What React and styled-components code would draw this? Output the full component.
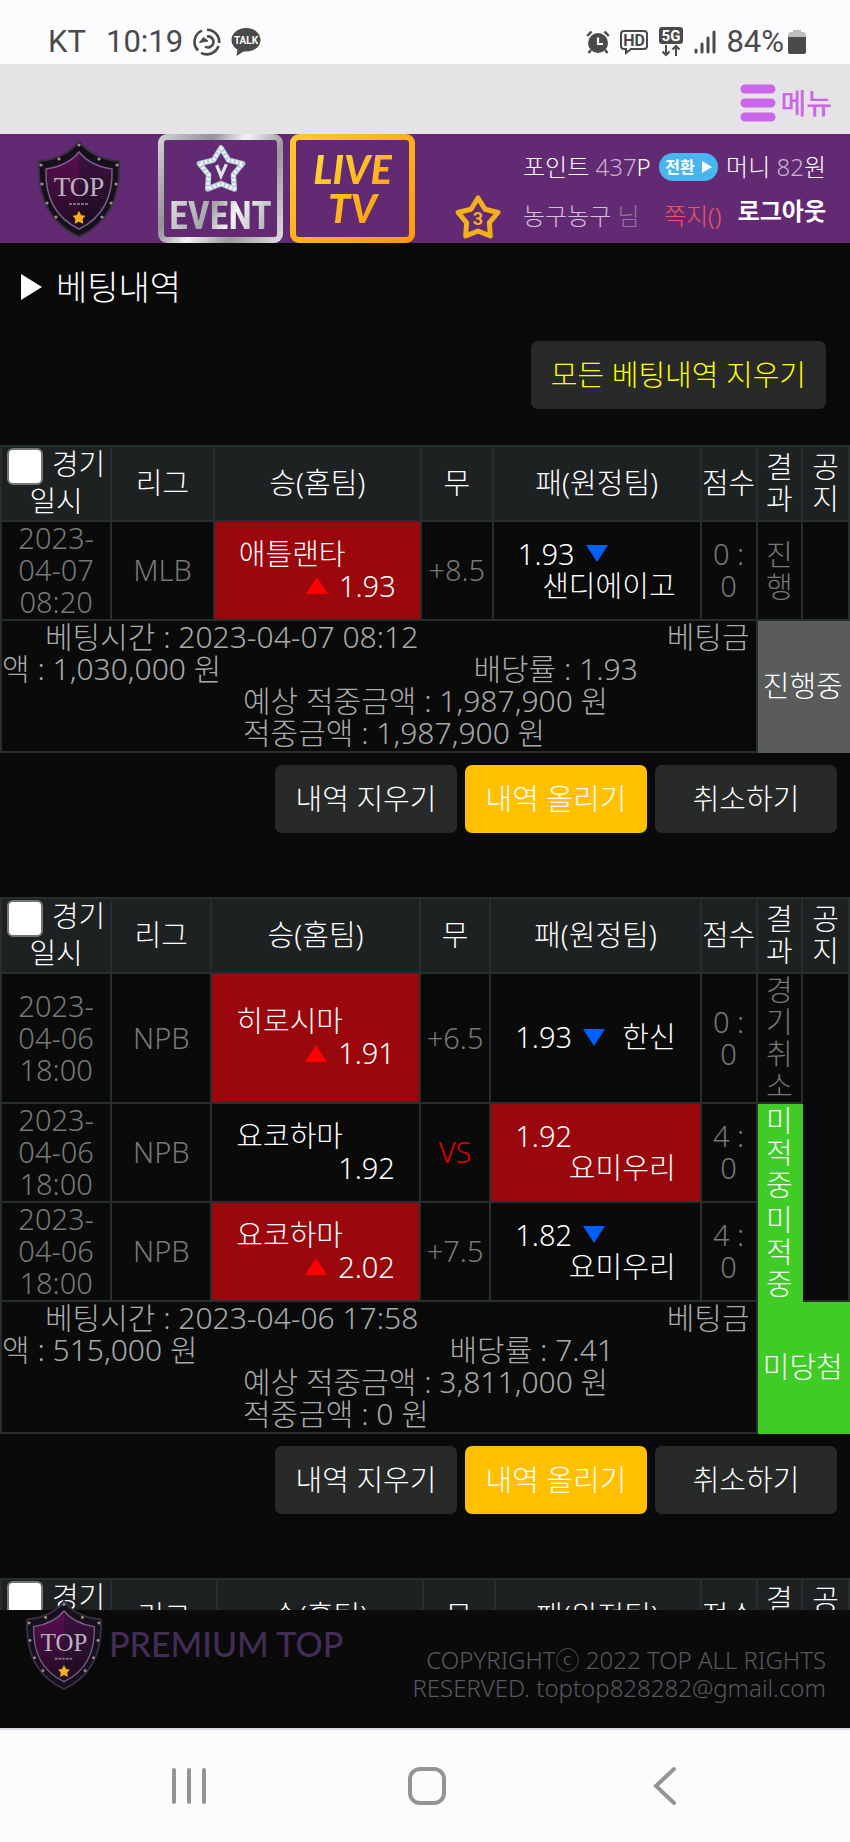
import { useId } from 'react';
import styled, { createGlobalStyle } from 'styled-components';

const summaryText = {
    time: '베팅시간',
    rate: '배당률',
    expected: '예상 적중금액',
    won: '적중금액',
};

const bets = [
    {
        id: 1,
        cols: [13, 12.1, 24.4, 8.5, 24.5, 6.6, 5.4, 5.5],
        games: [
            {
                date: '2023-04-07 08:20',
                league: 'MLB',
                home: { name: '애틀랜타', odds: '1.93', up: true, picked: true },
                draw: '+8.5',
                away: { name: '샌디에이고', odds: '1.93', down: true },
                score: '0 : 0',
                result: '진행',
            },
        ],
        time: '2023-04-07 08:12',
        amount: '1,030,000',
        rate: '1.93',
        expected: '1,987,900',
        won: '1,987,900',
        status: '진행중',
        statusColor: '#5a5c5b',
    },
    {
        id: 2,
        cols: [13, 11.8, 24.6, 8.3, 24.8, 6.6, 5.4, 5.5],
        games: [
            {
                date: '2023-04-06 18:00',
                league: 'NPB',
                home: { name: '히로시마', odds: '1.91', up: true, picked: true },
                draw: '+6.5',
                away: { name: '한신', odds: '1.93', down: true },
                score: '0 : 0',
                result: '경기취소',
            },
            {
                date: '2023-04-06 18:00',
                league: 'NPB',
                home: { name: '요코하마', odds: '1.92' },
                draw: 'VS',
                away: { name: '요미우리', odds: '1.92', picked: true },
                score: '4 : 0',
                result: '미적중',
                missed: true,
            },
            {
                date: '2023-04-06 18:00',
                league: 'NPB',
                home: { name: '요코하마', odds: '2.02', up: true, picked: true },
                draw: '+7.5',
                away: { name: '요미우리', odds: '1.82', down: true },
                score: '4 : 0',
                result: '미적중',
                missed: true,
            },
        ],
        time: '2023-04-06 17:58',
        amount: '515,000',
        rate: '7.41',
        expected: '3,811,000',
        won: '0',
        status: '미당첨',
        statusColor: '#3fcc26',
    },
    {
        id: 3,
        cols: [13, 12.5, 24.3, 8.4, 24.3, 6.6, 5.4, 5.5],
        games: [],
    },
];

const STAR = 'M24 4 L31 15.300 L44 18.500 L35.400 28.700 L36.300 42 L24 37 L11.700 42 L12.600 28.700 L4 18.500 L17 15.300 Z';

const Shield = ({ className }) => {
    const id = useId();

    return (
        <svg className={className} viewBox="0 0 84 98" aria-hidden="true">
            <defs>
                <linearGradient id={`${id}l`} x1="0" y1="0" x2="0" y2="1">
                    <stop offset="0" stopColor="#5c0d50" />
                    <stop offset="1" stopColor="#200c22" />
                </linearGradient>
                <linearGradient id={`${id}r`} x1="0" y1="0" x2="0" y2="1">
                    <stop offset="0" stopColor="#3c1240" />
                    <stop offset="1" stopColor="#1d0b20" />
                </linearGradient>
            </defs>
            <path d="M42 1 C50 13 66 20 82 21 C84 54 74 82 42 97 C10 82 0 54 2 21 C18 20 34 13 42 1 Z" fill="#15101c" stroke="#3a3044" strokeWidth="2" />
            <path d="M42 13 C50 22 62 27 74 29 C75 55 67 76 42 88 Z" fill={`url(#${id}r)`} />
            <path d="M42 13 C34 22 22 27 10 29 C9 55 17 76 42 88 Z" fill={`url(#${id}l)`} />
            <path d="M42 12 C50 22 62 27 75 29 C76 56 67 77 42 89 C17 77 8 56 9 29 C22 27 34 22 42 12 Z" fill="none" stroke="#7a5f88" strokeWidth="1.5" />
            {[[42, 5], [22, 19], [62, 19], [4, 25], [80, 25], [5, 44], [79, 44], [10, 63], [74, 63], [19, 77], [65, 77]].map(([x, y]) => (
                <circle key={`${x}-${y}`} cx={x} cy={y} r="1.6" fill="#a98982" />
            ))}
            <text x="42" y="56" textAnchor="middle" fontFamily="Liberation Serif, serif" fontSize="27" fill="#b9b3bb">TOP</text>
            <path d="M32 64 H52" stroke="#7b6d80" strokeWidth="2" strokeDasharray="3 1" />
            <path d="M42 73 l1.500 3 3 .5 -2 2.500 .5 3 -3 -1.500 -3 1.500 .5 -3 -2 -2.500 3 -.5 Z" fill="#f7b21a" stroke="#f7b21a" strokeWidth="2" />
        </svg>
    );
};

const StatusBar = () => (
    <StyledStatusBar>
        <StatusGroup>
            <Carrier>KT</Carrier>
            <span>10:19</span>
            <svg width="28" height="28" viewBox="0 0 28 28" fill="none" stroke="#4a4a4a" strokeWidth="2.6">
                <path d="M9 2.6 A12.3 12.3 0 0 0 5 22.5 M8 24.8 A12.3 12.3 0 0 0 25.5 18 M26.2 15 A12.3 12.3 0 0 0 14 1.7" />
                <path d="M14 8.500 A5.500 5.500 0 1 1 12 18.500" />
                <path d="M6.500 14.500 L10.500 9.500 L15 13 Z" fill="#4a4a4a" strokeWidth="1" />
            </svg>
            <svg width="30" height="28" viewBox="0 0 30 28">
                <path d="M15 0 C23 0 29.500 5 29.500 12 C29.500 19 23 23.500 15 23.500 L12.500 23.500 L5.500 28 L6.500 21.500 C3 19.500 .5 16 .5 12 C.5 5 7 0 15 0 Z" fill="#4a4a4a" />
                <text x="15" y="16" textAnchor="middle" fontFamily="Roboto, sans-serif" fontWeight="700" fontSize="10" fill="#fff">TALK</text>
            </svg>
        </StatusGroup>
        <StatusGroup $tight>
            <svg width="24" height="24" viewBox="0 0 24 24">
                <circle cx="12" cy="13" r="10" fill="#4a4a4a" />
                <path d="M1.200 6 L5.500 1.500 M22.800 6 L18.500 1.500 M5 20 L2.500 23 M19 20 L21.500 23" stroke="#4a4a4a" strokeWidth="2.500" />
                <path d="M12 7.500 V14 H17" stroke="#fff" strokeWidth="2.200" fill="none" />
            </svg>
            <svg width="30" height="26" viewBox="0 0 30 26">
                <path d="M5 2 H25 Q28 2 28 5 V17 Q28 20 25 20 H12 L7 24 V20 H5 Q2 20 2 17 V5 Q2 2 5 2 Z" fill="none" stroke="#4a4a4a" strokeWidth="2" />
                <text x="15" y="17" textAnchor="middle" fontFamily="Roboto, sans-serif" fontWeight="700" fontSize="16" fill="#4a4a4a">HD</text>
            </svg>
            <svg width="26" height="30" viewBox="0 0 26 30">
                <rect x="1" y="0" width="24" height="17" rx="3" fill="#4a4a4a" />
                <text x="13" y="14" textAnchor="middle" fontFamily="Roboto, sans-serif" fontWeight="700" fontSize="15" fill="#fff">5G</text>
                <path d="M8 18 V28 M4.500 24.500 L8 28 L11.500 24.500 M18 29 V19 M14.500 22.500 L18 19 L21.500 22.500" fill="none" stroke="#4a4a4a" strokeWidth="2" />
            </svg>
            <svg width="24" height="24" viewBox="0 0 24 24" stroke="#4a4a4a" strokeWidth="3" strokeLinecap="round">
                <path d="M3 20 V22 M9 14 V22 M15 8 V22 M21 2 V22" />
            </svg>
            <Battery>
                84%
                <svg width="18" height="26" viewBox="0 0 18 26">
                    <path d="M5 1 H13 V3 H16 Q18 4 18 6 V9 H0 V6 Q0 4 2 3 H5 Z" fill="#bdbdbf" />
                    <path d="M0 8 H18 V23 Q18 25 15 25 H3 Q0 25 0 23 Z" fill="#4a4a4a" />
                </svg>
            </Battery>
        </StatusGroup>
    </StyledStatusBar>
);

const Header = () => (
    <StyledHeader>
        <LogoLink href="#home" aria-label="TOP">
            <HeaderShield />
        </LogoLink>
        <EventButton type="button">
            <svg width="52" height="54" viewBox="0 0 48 47" aria-hidden="true">
                <path d={STAR} fill="none" stroke="#b9cdd8" strokeWidth="5" strokeLinejoin="round" />
                <path d={STAR} fill="none" stroke="#f2f8fb" strokeWidth="3" strokeDasharray="2 2" strokeLinejoin="round" />
                <path d="M20 20 L24 30 L29 19" fill="none" stroke="#dfe3e8" strokeWidth="3" />
            </svg>
            <EventText>EVENT</EventText>
        </EventButton>
        <LiveButton type="button">
            <LiveText>LIVE<br />TV</LiveText>
        </LiveButton>
        <Level width="48" height="46" viewBox="0 0 48 46" role="img" aria-label="3">
            <path d={STAR} fill="none" stroke="#f3b01d" strokeWidth="5" strokeLinejoin="round" />
            <text x="24" y="31" textAnchor="middle" fontFamily="Roboto, sans-serif" fontWeight="700" fontSize="18" fill="#f3b01d">3</text>
        </Level>
        <UserInfo>
            <InfoRow>
                <span>포인트 <Dim>437</Dim>P</span>
                <ConvertButton type="button">
                    전환
                    <svg width="10" height="12" viewBox="0 0 10 12"><path d="M0 0 L10 6 L0 12 Z" fill="#fff" /></svg>
                </ConvertButton>
                <span>머니 <Dim>82</Dim>원</span>
            </InfoRow>
            <InfoRow>
                <UserName>농구농구 <span>님</span></UserName>
                <NoteLink href="#notes">쪽지()</NoteLink>
                <LogoutLink href="#logout">로그아웃</LogoutLink>
            </InfoRow>
        </UserInfo>
    </StyledHeader>
);

const Up = () => (
    <svg width="22" height="17" viewBox="0 0 22 17" aria-label="상승"><path d="M11 0 L22 17 H0 Z" fill="#ff0000" /></svg>
);

const Down = () => (
    <svg width="22" height="17" viewBox="0 0 22 17" aria-label="하락"><path d="M0 0 H22 L11 17 Z" fill="#005fff" /></svg>
);

const GameRow = ({ game, notice }) => (
    <tr>
        <Cell>{game.date}</Cell>
        <Cell>{game.league}</Cell>
        <TeamCell $picked={game.home.picked}>
            <Team>
                <span>{game.home.name}</span>
                <Odds $end>{game.home.up && <Up />}{game.home.odds}</Odds>
            </Team>
        </TeamCell>
        <Cell $versus={game.draw === 'VS'}>{game.draw}</Cell>
        <TeamCell $picked={game.away.picked}>
            <Team>
                <Odds>{game.away.odds}{game.away.down && <Down />}</Odds>
                <AwayName>{game.away.name}</AwayName>
            </Team>
        </TeamCell>
        <ScoreCell>{game.score}</ScoreCell>
        <ResultCell $missed={game.missed}>{game.result}</ResultCell>
        {notice && <Cell rowSpan={notice} />}
    </tr>
);

const Bet = ({ bet }) => (
    <BetBlock>
        <BetTable>
            <colgroup>
                {bet.cols.map((width, index) => <col key={index} style={{ width: `${width}%` }} />)}
            </colgroup>
            <thead>
                <tr>
                    <HeadCell><label><Checkbox type="checkbox" />경기 일시</label></HeadCell>
                    <HeadCell>리그</HeadCell>
                    <HeadCell>승(홈팀)</HeadCell>
                    <HeadCell>무</HeadCell>
                    <HeadCell>패(원정팀)</HeadCell>
                    <HeadCell>점수</HeadCell>
                    <HeadCell>결과</HeadCell>
                    <HeadCell>공지</HeadCell>
                </tr>
            </thead>
            <tbody>
                {bet.games.map((game, index) => (
                    <GameRow key={index} game={game} notice={index === 0 && bet.games.length} />
                ))}
                {bet.status && (
                    <tr>
                        <SummaryCell colSpan={6}>
                            <SummaryTop>
                                <span>{summaryText.time} : {bet.time}</span>
                                <span>베팅금</span>
                            </SummaryTop>
                            <SummaryAmount>
                                <span>액 : {bet.amount} 원</span>
                                <span>{summaryText.rate} : {bet.rate}</span>
                            </SummaryAmount>
                            <SummaryLine>{summaryText.expected} : {bet.expected} 원</SummaryLine>
                            <SummaryLine>{summaryText.won} : {bet.won} 원</SummaryLine>
                        </SummaryCell>
                        <StatusCell colSpan={2} $color={bet.statusColor}>{bet.status}</StatusCell>
                    </tr>
                )}
            </tbody>
        </BetTable>
        {bet.status && (
            <Actions>
                <Button type="button">내역 지우기</Button>
                <Button type="button" $primary>내역 올리기</Button>
                <Button type="button">취소하기</Button>
            </Actions>
        )}
    </BetBlock>
);

const App = () => (
    <>
        <GlobalStyle />
        <Screen>
            <StatusBar />
            <MenuBar>
                <MenuButton type="button">
                    <svg width="36" height="38" viewBox="0 0 36 38" stroke="#cb66ea" strokeWidth="9" strokeLinecap="round">
                        <path d="M5 5 H31 M5 19 H31 M5 33 H31" />
                    </svg>
                    메뉴
                </MenuButton>
            </MenuBar>
            <Header />
            <Content>
                <Title>
                    <svg width="21" height="26" viewBox="0 0 21 26" aria-hidden="true"><path d="M0 0 L21 13 L0 26 Z" fill="#fff" /></svg>
                    베팅내역
                </Title>
                <ClearAll>
                    <ClearButton type="button">모든 베팅내역 지우기</ClearButton>
                </ClearAll>
                {bets.map((bet) => <Bet key={bet.id} bet={bet} />)}
            </Content>
            <Footer>
                <FooterShield />
                <Brand>PREMIUM TOP</Brand>
                <Copyright>COPYRIGHTⓒ 2022 TOP ALL RIGHTS RESERVED. toptop828282@gmail.com</Copyright>
            </Footer>
            <NavBar>
                <NavButton type="button" aria-label="최근 앱">
                    <svg width="40" height="40" viewBox="0 0 40 40"><path d="M5 4 V36 M20 4 V36 M35 4 V36" /></svg>
                </NavButton>
                <NavButton type="button" aria-label="홈">
                    <svg width="40" height="40" viewBox="0 0 40 40"><rect x="3" y="3" width="34" height="34" rx="10" /></svg>
                </NavButton>
                <NavButton type="button" aria-label="뒤로">
                    <svg width="40" height="40" viewBox="0 0 40 40"><path d="M29 3 L11 20 L29 37" /></svg>
                </NavButton>
            </NavBar>
        </Screen>
    </>
);

export default App;

const GlobalStyle = createGlobalStyle`
    * {
        box-sizing: border-box;
    }

    body {
        margin: 0;
        background-color: #0a0a0a;
        color: #fff;
        font-family: "Noto Sans", "Noto Sans CJK KR", sans-serif;
        font-size: 29px;
        font-weight: 300;
        line-height: 32px;
    }

    button {
        border: 0;
        padding: 0;
        font: inherit;
        color: inherit;
        background: none;
        cursor: pointer;
    }

    a {
        color: inherit;
        text-decoration: none;
    }
`

const Screen = styled.div`
    display: flex;
    flex-direction: column;
    height: 100vh;
`

const StyledStatusBar = styled.div`
    flex: none;
    display: flex;
    justify-content: space-between;
    padding: 24px 44px 4px 48px;
    background-color: #fcfcfe;
    color: #4a4a4a;
    font-family: Roboto, sans-serif;
    font-size: 31px;
    font-weight: 400;
    line-height: 36px;
`

const StatusGroup = styled.div`
    display: flex;
    align-items: center;
    gap: ${({ $tight }) => $tight ? '9px' : '10px'};
`

const Carrier = styled.span`
    margin-right: 10px;
`

const Battery = styled.span`
    display: flex;
    align-items: center;
    gap: 4px;
`

const MenuBar = styled.nav`
    flex: none;
    display: flex;
    justify-content: flex-end;
    padding: 8px 18px 0;
    height: 70px;
    background-color: #e5e3e5;
`

const MenuButton = styled.button`
    display: flex;
    align-items: center;
    gap: 4px;
    color: #cb66ea;
    font-size: 28px;
    font-weight: 500;
`

const StyledHeader = styled.header`
    flex: none;
    display: flex;
    padding: 0 24px 0 37px;
    background-color: #632a74;
`

const LogoLink = styled.a`
    display: flex;
    align-items: center;
    margin-right: 37px;
`

const HeaderShield = styled(Shield)`
    width: 84px;
    height: 98px;
`

const EventButton = styled.button`
    width: 125px;
    height: 109px;
    display: flex;
    flex-direction: column;
    align-items: center;
    padding-top: 2px;
    border: 6px solid transparent;
    border-radius: 9px;
    background: linear-gradient(#632a74, #632a74) padding-box, linear-gradient(120deg, #d5d5d8, #929297 30%, #f4f4f6 48%, #99999e 70%, #e0e0e3) border-box;
    margin-right: 7px;
`

const EventText = styled.span`
    font: 700 38px/40px "Liberation Sans Narrow", "Roboto Condensed", Lato, sans-serif;
    color: transparent;
    background: linear-gradient(120deg, #e4e4e6, #a3a3a8 40%, #f4f4f6 60%, #a3a3a8);
    background-clip: text;
`

const LiveButton = styled(EventButton)`
    justify-content: center;
    padding-top: 0;
    margin-right: 0;
    background: linear-gradient(#632a74, #632a74) padding-box, linear-gradient(135deg, #fdc92f, #ff9a0a) border-box;
`

const LiveText = styled.span`
    font: italic 900 40px/39px Lato, sans-serif;
    color: transparent;
    background: linear-gradient(135deg, #fddc3a, #ff9408);
    background-clip: text;
`

const Level = styled.svg`
    flex: none;
    align-self: flex-end;
    margin: 0 21px 3px auto;
`

const UserInfo = styled.div`
    display: flex;
    flex-direction: column;
    gap: 17px;
    width: 303px;
    font-size: 24px;
    padding-top: 17px;
`

const InfoRow = styled.div`
    display: flex;
    justify-content: space-between;
    align-items: center;
    height: 32px;
    white-space: nowrap;
`

const Dim = styled.span`
    color: #c9b3d0;
`

const ConvertButton = styled.button`
    display: flex;
    align-items: center;
    justify-content: center;
    gap: 7px;
    width: 59px;
    height: 28px;
    border-radius: 14px;
    background-color: #49b5ee;
    font-size: 16px;
    line-height: 28px;
    font-weight: 700;
`

const UserName = styled.span`
    color: #d3c0d9;

    span {
        color: #94739e;
    }
`

const NoteLink = styled.a`
    color: #ee5560;
    margin-left: 8px;
`

const LogoutLink = styled.a`
    font-weight: 700;
    margin-bottom: 10px;
`

const Content = styled.main`
    flex: 1;
    min-height: 0;
    overflow: hidden;
`

const Title = styled.h1`
    display: flex;
    align-items: center;
    gap: 14px;
    margin: 0;
    padding: 24px 21px 0;
    font-size: 34px;
    line-height: 40px;
    font-weight: 300;
`

const ClearAll = styled.div`
    display: flex;
    justify-content: flex-end;
    padding: 34px 24px 36px;
`

const Button = styled.button`
    min-width: 182px;
    height: 68px;
    padding: 0 20px;
    border-radius: 7px;
    background-color: ${({ $primary }) => $primary ? '#ffc000' : '#282a2a'};
`

const ClearButton = styled(Button)`
    color: #ffff00;
`

const BetBlock = styled.section`
    margin-bottom: 64px;
`

const BetTable = styled.table`
    width: 100%;
    table-layout: fixed;
    border-collapse: separate;
    border-spacing: 0;
    border: solid #272e2f;
    border-width: 2px 0 0 2px;
`

const Cell = styled.td`
    height: 99px;
    padding: 0 0 1px;
    border: solid #272e2f;
    border-width: 0 2px 2px 0;
    text-align: center;
    vertical-align: middle;
    color: ${({ $versus }) => $versus ? '#e00000' : '#757978'};
`

const HeadCell = styled(Cell).attrs({ as: 'th', scope: 'col' })`
    height: 75px;
    padding-bottom: 2px;
    background-color: #1d2122;
    color: #fff;
    font-weight: 300;
`

const TeamCell = styled(Cell)`
    padding: 0 24px 2px;
    color: #fff;
    background-color: ${({ $picked }) => $picked ? '#9a080d' : 'transparent'};
`

const Team = styled.div`
    display: flex;
    flex-wrap: wrap;
    justify-content: space-between;
    column-gap: 8px;
`

const Odds = styled.span`
    display: inline-flex;
    align-items: center;
    gap: 11px;
    margin-left: ${({ $end }) => $end ? 'auto' : '0'};
`

const AwayName = styled.span`
    margin-left: auto;
`

const ScoreCell = styled(Cell)`
    padding: 0 4px 1px;
`

const ResultCell = styled(Cell)`
    padding: 0;
    ${({ $missed }) => $missed && `
        color: #fff;
        background-color: #3fcc26;
        border-color: #3fcc26;
    `}
`

const SummaryCell = styled(Cell)`
    height: 132px;
    vertical-align: top;
    font-size: 30px;
    color: #a8abaa;
    text-align: left;
    white-space: nowrap;
`

const SummaryTop = styled.div`
    display: flex;
    justify-content: space-between;
    padding: 0 6px 0 43px;
`

const SummaryAmount = styled.div`
    display: flex;
    gap: 252px;
`

const SummaryLine = styled.div`
    padding-left: 241px;
`

const StatusCell = styled(Cell)`
    color: #fff;
    background-color: ${({ $color }) => $color};
    border-color: ${({ $color }) => $color};
`

const Checkbox = styled.input`
    appearance: none;
    width: 36px;
    height: 37px;
    margin: 0 9px 0 0;
    vertical-align: middle;
    border: 2px solid #757575;
    border-radius: 6px;
    background-color: #fff;
`

const Actions = styled.div`
    display: flex;
    justify-content: flex-end;
    gap: 8px;
    padding: 12px 13px 0;
`

const Footer = styled.footer`
    flex: none;
    position: relative;
    display: flex;
    justify-content: space-between;
    padding: 14px 24px 26px 109px;
    background-color: #0a0a0a;
`

/* the crest hangs over the list above the footer */
const FooterShield = styled(Shield)`
    position: absolute;
    left: 24px;
    top: -10px;
    width: 80px;
    height: 90px;
`

const Brand = styled.strong`
    font: 500 34px/40px Lato, sans-serif;
    color: #432c57;
    white-space: nowrap;
`

const Copyright = styled.p`
    width: 440px;
    margin: 22px 0 0;
    font-size: 24px;
    line-height: 28px;
    text-align: right;
    color: #5a5760;
`

const NavBar = styled.nav`
    flex: none;
    display: flex;
    justify-content: center;
    gap: 198px;
    padding: 36px 0 36px 4px;
    border-top: 2px solid #dcdce4;
    background-color: #fcfcfe;
`

const NavButton = styled.button`
    height: 40px;

    svg {
        display: block;
        fill: none;
        stroke: #949494;
        stroke-width: 4px;
        stroke-linecap: round;
    }
`
